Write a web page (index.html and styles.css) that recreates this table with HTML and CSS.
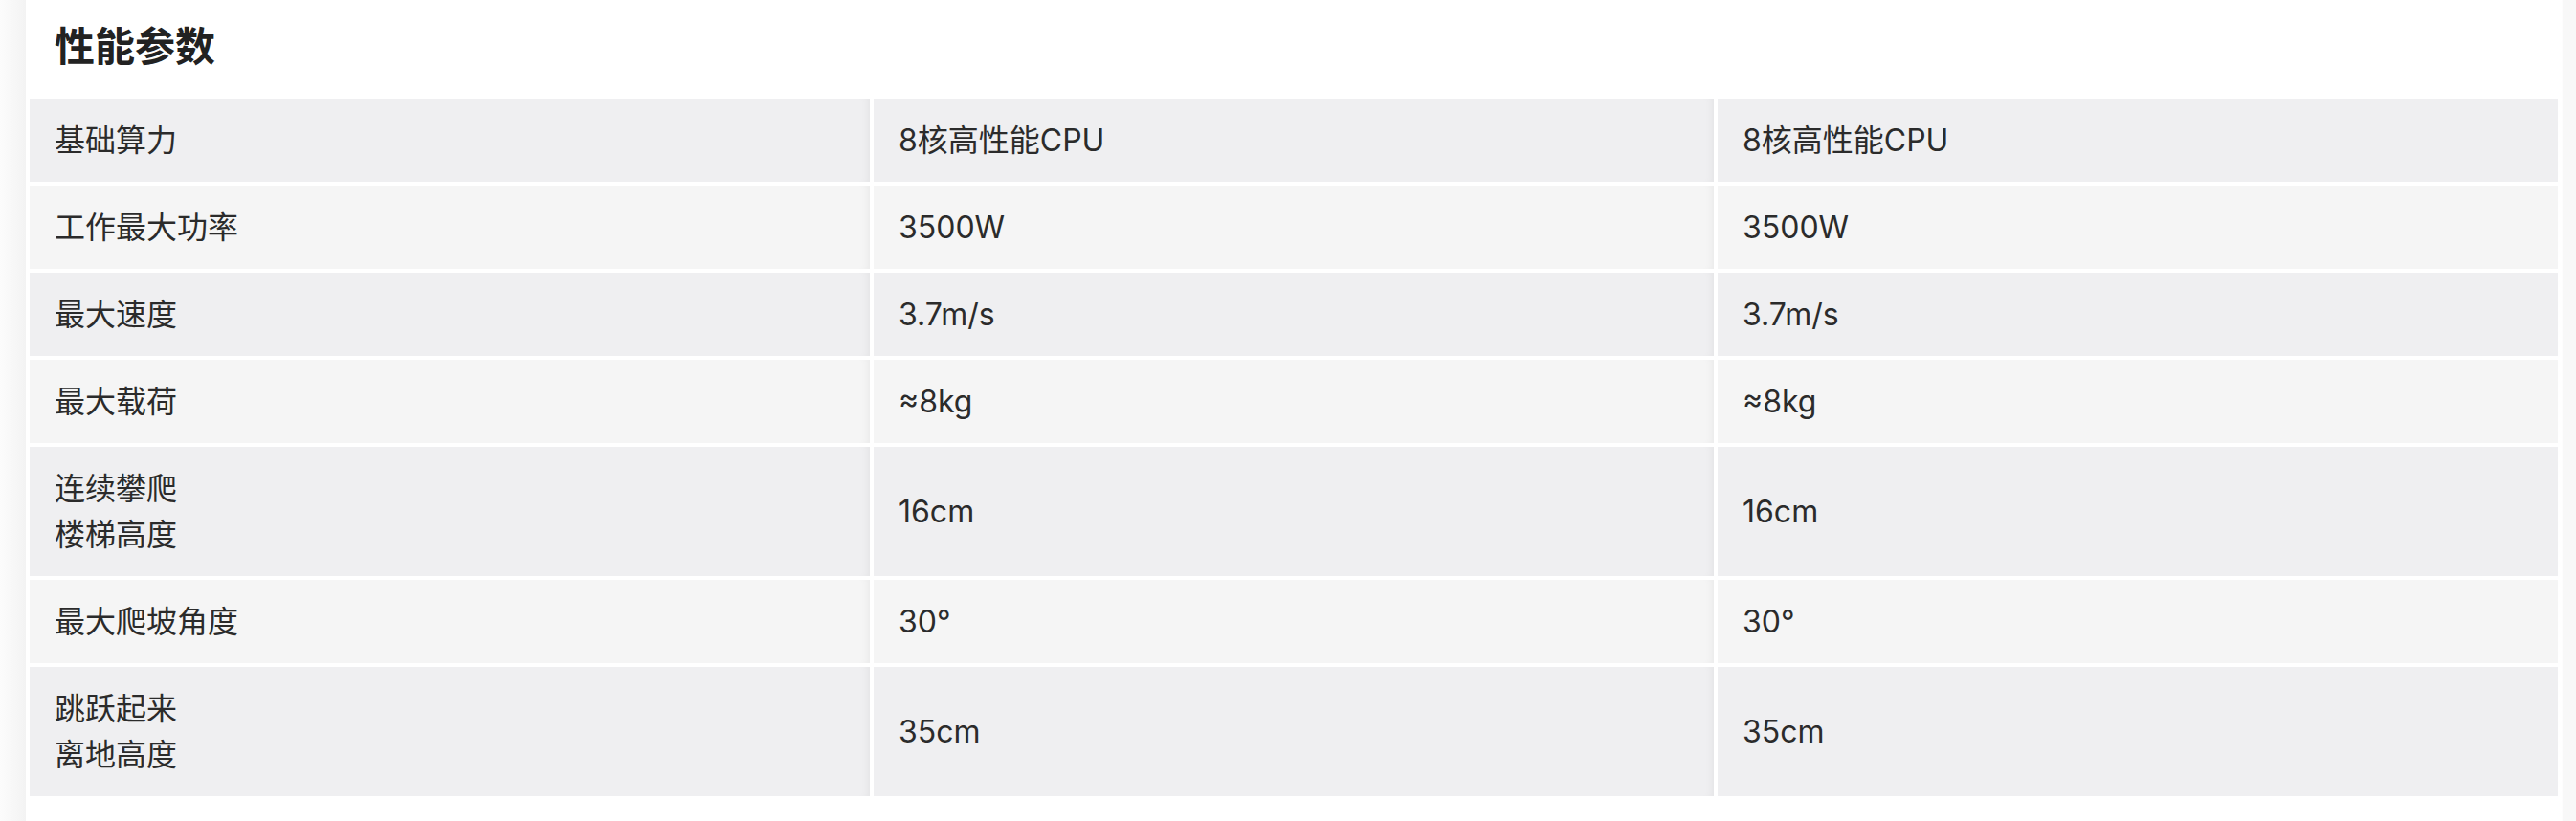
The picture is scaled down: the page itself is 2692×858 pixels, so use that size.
FILE: index.html
```html
<!DOCTYPE html>
<html lang="zh-CN">
<head>
<meta charset="utf-8">
<title>性能参数</title>
<link rel="stylesheet" href="styles.css">
</head>
<body>
<div class="page">
  <div class="side-left"></div>
  <section class="card">
    <h2 class="title">性能参数</h2>
    <div class="spec-table">
      <div class="row odd">
        <div class="cell">基础算力</div>
        <div class="cell shade">8核高性能CPU</div>
        <div class="cell">8核高性能CPU</div>
      </div>
      <div class="row even">
        <div class="cell">工作最大功率</div>
        <div class="cell shade">3500W</div>
        <div class="cell">3500W</div>
      </div>
      <div class="row odd">
        <div class="cell">最大速度</div>
        <div class="cell shade">3.7m/s</div>
        <div class="cell">3.7m/s</div>
      </div>
      <div class="row even">
        <div class="cell">最大载荷</div>
        <div class="cell shade">≈8kg</div>
        <div class="cell">≈8kg</div>
      </div>
      <div class="row odd">
        <div class="cell">连续攀爬<br>楼梯高度</div>
        <div class="cell shade">16cm</div>
        <div class="cell">16cm</div>
      </div>
      <div class="row even">
        <div class="cell">最大爬坡角度</div>
        <div class="cell shade">30°</div>
        <div class="cell">30°</div>
      </div>
      <div class="row odd">
        <div class="cell">跳跃起来<br>离地高度</div>
        <div class="cell shade">35cm</div>
        <div class="cell">35cm</div>
      </div>
    </div>
  </section>
  <div class="side-right"></div>
</div>
</body>
</html>
```

FILE: styles.css
```css
html, body {
  margin: 0;
  padding: 0;
  background: #ffffff;
}

body {
  font-family: "Inter", "Noto Sans CJK SC", sans-serif;
  color: #2a2a2a;
}

.page {
  display: flex;
  min-height: 100vh;
}

.side-left {
  flex: 0 0 27px;
  background: linear-gradient(to right, #fcfcfc, #f3f3f3);
}

.side-right {
  flex: 0 0 14px;
  background: #f8f8f8;
  border-left: 1px solid #fdfdfd;
}

.card {
  flex: 1;
  min-width: 0;
  background: #ffffff;
  padding: 17px 4px 0 4px;
}

.title {
  margin: 0 0 23px 0;
  padding-left: 26px;
  font-size: 42px;
  line-height: 63px;
  font-weight: 700;
  color: #222222;
}

.spec-table {
  display: flex;
  flex-direction: column;
  gap: 4px;
}

.row {
  display: grid;
  grid-template-columns: repeat(3, 1fr);
  column-gap: 4px;
}

.cell {
  display: flex;
  align-items: center;
  padding: 19.5px 26px;
  font-size: 32px;
  line-height: 48px;
  font-weight: 400;
  color: #2b2b2b;
}

.row .cell:first-child,
.row .cell.shade {
  box-shadow: inset -8px 0 8px -6px rgba(0, 0, 0, 0.05);
}

.odd .cell {
  background-color: #efeff1;
}

.even .cell {
  background-color: #f5f5f5;
}
```
